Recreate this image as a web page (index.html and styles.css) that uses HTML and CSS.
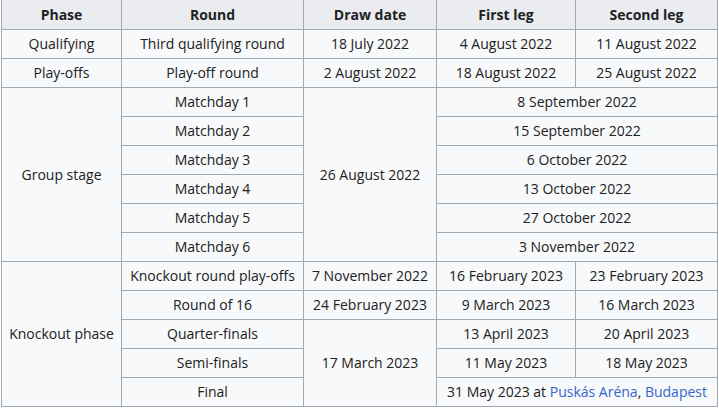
FILE: index.html
```html
<!DOCTYPE html>
<html>
<head>
<meta charset="utf-8">
<link rel="stylesheet" href="styles.css">
</head>
<body>
<table class="wikitable">
<colgroup>
<col class="c1"><col class="c2"><col class="c3"><col class="c4"><col class="c5">
</colgroup>
<thead>
<tr><th>Phase</th><th>Round</th><th>Draw date</th><th>First leg</th><th>Second leg</th></tr>
</thead>
<tbody>
<tr><td>Qualifying</td><td>Third qualifying round</td><td>18 July 2022</td><td>4 August 2022</td><td>11 August 2022</td></tr>
<tr><td>Play-offs</td><td>Play-off round</td><td>2 August 2022</td><td>18 August 2022</td><td>25 August 2022</td></tr>
<tr><td rowspan="6">Group stage</td><td>Matchday 1</td><td rowspan="6">26 August 2022</td><td colspan="2">8 September 2022</td></tr>
<tr><td>Matchday 2</td><td colspan="2">15 September 2022</td></tr>
<tr><td>Matchday 3</td><td colspan="2">6 October 2022</td></tr>
<tr><td>Matchday 4</td><td colspan="2">13 October 2022</td></tr>
<tr><td>Matchday 5</td><td colspan="2">27 October 2022</td></tr>
<tr><td>Matchday 6</td><td colspan="2">3 November 2022</td></tr>
<tr><td rowspan="5">Knockout phase</td><td>Knockout round play-offs</td><td>7 November 2022</td><td>16 February 2023</td><td>23 February 2023</td></tr>
<tr><td>Round of 16</td><td>24 February 2023</td><td>9 March 2023</td><td>16 March 2023</td></tr>
<tr><td>Quarter-finals</td><td rowspan="3">17 March 2023</td><td>13 April 2023</td><td>20 April 2023</td></tr>
<tr><td>Semi-finals</td><td>11 May 2023</td><td>18 May 2023</td></tr>
<tr><td>Final</td><td colspan="2">31 May 2023 at <a href="#" class="link">Puskás Aréna</a>, <a href="#" class="link">Budapest</a></td></tr>
</tbody>
</table>
</body>
</html>
```

FILE: styles.css
```css
html, body {
  margin: 0;
  padding: 0;
  background: #ffffff;
}
body {
  font-family: "Open Sans", "Noto Sans", sans-serif;
  font-size: 14px;
  color: #202122;
}
.wikitable {
  margin: -1px 0 0 1px;
  border-collapse: collapse;
  border: 1px solid #a2a9b1;
  background: #f8f9fa;
  table-layout: fixed;
  width: 716px;
}
.c1 { width: 120px; }
.c2 { width: 182px; }
.c3 { width: 133px; }
.c4 { width: 139px; }
.c5 { width: 142px; }
.wikitable th,
.wikitable td {
  border: 1px solid #a2a9b1;
  padding: 0 2px;
  height: 28px;
  line-height: 20px;
  text-align: center;
  vertical-align: middle;
  white-space: nowrap;
  overflow: hidden;
}
.wikitable th {
  background: #eaecf0;
  font-weight: bold;
  height: 29px;
}
.link {
  color: #3366cc;
  text-decoration: none;
}
```
